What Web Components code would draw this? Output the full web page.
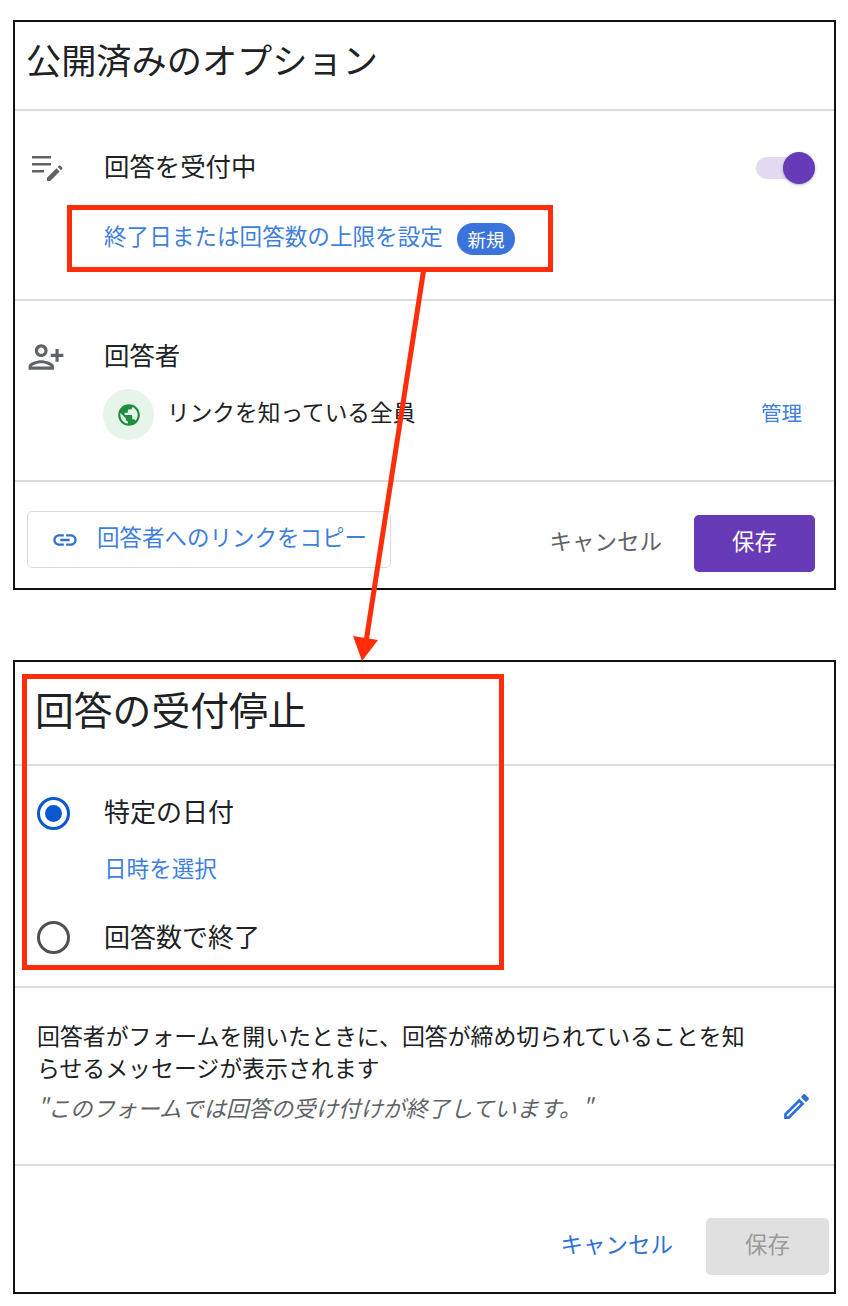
<!DOCTYPE html>
<html lang="ja">
<head>
<meta charset="utf-8">
<title>公開済みのオプション</title>
<style>
  html, body { margin: 0; background: #fff; }
  body {
    position: relative;
    width: 848px;
    height: 1306px;
    overflow: hidden;
    padding: 20px 0 0 13px;
    box-sizing: border-box;
    font-family: "Noto Sans CJK JP", "Liberation Sans", sans-serif;
    color: #202124;
  }
  dialog-panel + dialog-panel { margin-top: 70px; }
</style>
</head>
<body>

<dialog-panel style="height:570px">
  <panel-section style="height:89px;padding:0 0 14px 11px">
    <panel-title size="35.2">公開済みのオプション</panel-title>
  </panel-section>
  <panel-section style="height:190px;padding:0 19px 0 14px;justify-content:flex-start">
    <option-row label="回答を受付中" style="margin-top:35px">
      <svg slot="icon" width="36" height="30" viewBox="0 0 36 30" fill="#5f6368" style="margin-top:6px">
        <path d="M3 2h19v2.6H3zM3 9h19v2.6H3zM3 16h12v2.6H3z"/>
        <path d="M18 27v-3.2l9.5-9.5 3.2 3.2-9.5 9.5z"/>
        <path d="M28.7 13.1l1.3-1.3c.4-.4 1-.4 1.4 0l1.8 1.8c.4.4.4 1 0 1.4l-1.3 1.3z"/>
      </svg>
      <toggle-switch slot="end" style="margin-top:4px"></toggle-switch>
    </option-row>
    <div style="display:flex;align-items:center;margin:31px 0 0 75px">
      <text-link size="22.6">終了日または回答数の上限を設定</text-link>
      <new-badge style="margin-top:6px">新規</new-badge>
    </div>
  </panel-section>
  <panel-section style="height:181px;padding:0 19px 0 14px;justify-content:flex-start">
    <option-row label="回答者" style="margin-top:34px">
      <svg slot="icon" width="38" height="38" viewBox="0 0 24 24" fill="#5f6368" style="transform:scaleX(-1);margin:4px 0 0 -2px">
        <path d="M15 12c2.21 0 4-1.79 4-4s-1.79-4-4-4-4 1.79-4 4 1.79 4 4 4zm0-6c1.1 0 2 .9 2 2s-.9 2-2 2-2-.9-2-2 .9-2 2-2zm0 8c-2.67 0-8 1.34-8 4v2h16v-2c0-2.66-5.33-4-8-4zm-6 4c.22-.72 3.31-2 6-2 2.7 0 5.8 1.29 6 2H9zm-3-3v-3h3v-2H6V7H4v3H1v2h3v3h2z"/>
      </svg>
    </option-row>
    <div style="display:flex;align-items:center;margin:14px 13px 0 74px">
      <globe-chip></globe-chip>
      <span style="font-size:22.7px;margin:0 0 6px 13px;flex:1">リンクを知っている全員</span>
      <text-link size="20.5" style="margin-bottom:4px">管理</text-link>
    </div>
  </panel-section>
  <panel-footer style="height:106px;padding:0 19px 0 12px">
    <copy-link style="margin-top:29px">回答者へのリンクをコピー</copy-link>
    <span style="flex:1"></span>
    <text-button color="#5f6368" style="margin:42px 32px 0 0">キャンセル</text-button>
    <solid-button bg="#673ab7" color="#fff" style="margin-top:33px">保存</solid-button>
  </panel-footer>
</dialog-panel>

<dialog-panel style="height:634px">
  <panel-section style="height:104px;padding:0 0 10px 20px">
    <panel-title size="38.8">回答の受付停止</panel-title>
  </panel-section>
  <panel-section style="height:222px;padding:0 0 0 22px;justify-content:flex-start">
    <radio-row checked style="margin-top:27px">特定の日付</radio-row>
    <text-link size="22.6" style="margin:19px 0 0 67px">日時を選択</text-link>
    <radio-row style="margin-top:34px">回答数で終了</radio-row>
  </panel-section>
  <panel-section style="height:178px;padding:0 26px 0 22px;justify-content:flex-start">
    <close-message note="&quot;このフォームでは回答の受け付けが終了しています。&quot;">回答者がフォームを開いたときに、回答が締め切られていることを知らせるメッセージが表示されます</close-message>
  </panel-section>
  <panel-footer style="height:126px;padding:0 5px 0 0">
    <span style="flex:1"></span>
    <text-button color="#2f6fd8" style="margin:61px 33px 0 0">キャンセル</text-button>
    <solid-button bg="#e0e0e0" color="#9a9a9a" style="width:123px;margin-top:52px">保存</solid-button>
  </panel-footer>
</dialog-panel>

<red-box style="left:67px;top:205px;width:486px;height:67px"></red-box>
<red-box style="left:22px;top:674px;width:482px;height:296px"></red-box>
<red-arrow></red-arrow>

<script>
function define(name, css, html, init) {
  customElements.define(name, class extends HTMLElement {
    constructor() {
      super();
      this.attachShadow({ mode: 'open' });
    }
    connectedCallback() {
      const body = typeof html === 'function' ? html(this) : html;
      this.shadowRoot.innerHTML = `<style>${css}</style>${body}`;
      if (init) init(this);
    }
  });
}

define('dialog-panel',
  `:host { display: block; width: 823px; box-sizing: border-box; border: 2px solid #111; background: #fff; }`,
  `<slot></slot>`);

define('panel-section',
  `:host { display: flex; flex-direction: column; justify-content: center; box-sizing: border-box; border-bottom: 2px solid #dadce0; }`,
  `<slot></slot>`);

define('panel-footer',
  `:host { display: flex; align-items: flex-start; box-sizing: border-box; }`,
  `<slot></slot>`);

define('panel-title',
  `:host { display: block; line-height: 1.3; }`,
  `<slot></slot>`,
  el => { el.style.fontSize = el.getAttribute('size') + 'px'; });

define('option-row',
  `:host { display: flex; align-items: center; height: 40px; }
   .icon { width: 75px; display: flex; align-items: center; }
   .label { flex: 1; font-size: 25.4px; margin-bottom: 2px; }`,
  el => `<div class="icon"><slot name="icon"></slot></div>
         <div class="label">${el.getAttribute('label')}</div>
         <slot name="end"></slot>`);

define('toggle-switch',
  `:host { display: block; position: relative; width: 60px; height: 32px; }
   .track { position: absolute; left: 1px; top: 5px; width: 46px; height: 22px; border-radius: 11px; background: #e3daf2; }
   .thumb { position: absolute; right: 0; top: 0; width: 32px; height: 32px; border-radius: 50%; background: #673ab7; box-shadow: 0 1px 3px rgba(0,0,0,.3); }`,
  `<div class="track"></div><div class="thumb"></div>`);

define('text-link',
  `:host { display: block; color: #3f7fdd; line-height: 1.4; }`,
  `<slot></slot>`,
  el => { el.style.fontSize = el.getAttribute('size') + 'px'; });

define('new-badge',
  `:host { display: flex; align-items: center; justify-content: center; width: 58px; height: 32px; margin-left: 14px; border-radius: 16px; background: #3a73dc; color: #fff; font-size: 18.5px; }`,
  `<slot></slot>`);

define('globe-chip',
  `:host { display: flex; align-items: center; justify-content: center; width: 51px; height: 51px; border-radius: 50%; background: #e6f4ea; }`,
  `<svg width="26" height="26" viewBox="0 0 24 24" fill="#1e8e3e"><path d="M12 2C6.48 2 2 6.48 2 12s4.48 10 10 10 10-4.48 10-10S17.52 2 12 2zm-1 17.93c-3.95-.49-7-3.85-7-7.93 0-.62.08-1.21.21-1.79L9 15v1c0 1.1.9 2 2 2v1.93zm6.9-2.54c-.26-.81-1-1.39-1.9-1.39h-1v-3c0-.55-.45-1-1-1H8v-2h2c.55 0 1-.45 1-1V7h2c1.1 0 2-.9 2-2v-.41c2.93 1.19 5 4.06 5 7.41 0 2.08-.8 3.97-2.1 5.39z"/></svg>`);

define('copy-link',
  `:host { display: flex; align-items: center; box-sizing: border-box; width: 364px; height: 57px; padding: 0 0 7px 23px; border: 1.5px solid #dadce0; border-radius: 5px; color: #3f7fdd; font-size: 22.5px; }
   svg { margin: 7px 18px 0 0; }`,
  `<svg width="28" height="28" viewBox="0 0 24 24" fill="#2f6fd8"><path d="M3.9 12c0-1.71 1.39-3.1 3.1-3.1h4V7H7c-2.76 0-5 2.24-5 5s2.24 5 5 5h4v-1.9H7c-1.71 0-3.1-1.39-3.1-3.1zM8 13h8v-2H8v2zm9-6h-4v1.9h4c1.71 0 3.1 1.39 3.1 3.1s-1.39 3.1-3.1 3.1h-4V17h4c2.76 0 5-2.24 5-5s-2.24-5-5-5z"/></svg><slot></slot>`);

define('text-button',
  `:host { display: block; font-size: 22.5px; }`,
  `<slot></slot>`,
  el => { el.style.color = el.getAttribute('color'); });

define('solid-button',
  `:host { display: flex; align-items: center; justify-content: center; box-sizing: border-box; width: 121px; height: 57px; padding-bottom: 8px; border-radius: 5px; font-size: 22.4px; }`,
  `<slot></slot>`,
  el => {
    el.style.background = el.getAttribute('bg');
    el.style.color = el.getAttribute('color');
  });

define('radio-row',
  `:host { display: flex; align-items: center; height: 40px; font-size: 26px; }
   .dot { box-sizing: border-box; width: 33px; height: 33px; margin-right: 34px; border-radius: 50%; border: 3.5px solid #505050; display: flex; align-items: center; justify-content: center; }
   .label { margin-bottom: 5px; }
   :host([checked]) .dot { border-color: #0b57d0; }
   :host([checked]) .dot::after { content: ""; width: 17px; height: 17px; border-radius: 50%; background: #0b57d0; }`,
  `<div class="dot"></div><div class="label"><slot></slot></div>`);

define('close-message',
  `:host { display: block; position: relative; }
   .text { font-size: 22.9px; line-height: 32px; margin-top: 31px; width: 715px; }
   .note { font-size: 22.4px; font-style: italic; color: #5f6368; line-height: 32px; margin-top: 8px; }
   svg { position: absolute; right: -5px; top: 102px; }`,
  el => `<div class="text"><slot></slot></div>
         <div class="note">${el.getAttribute('note').replace(/"/g, '&quot;')}</div>
         <svg width="33" height="33" viewBox="0 0 24 24" fill="#2f6fd8"><path d="M3 17.25V21h3.75L17.81 9.94l-3.75-3.75L3 17.25zM5.92 19H5v-.92l9.06-9.06.92.92L5.92 19zM20.71 5.63l-2.34-2.34c-.39-.39-1.02-.39-1.41 0l-1.83 1.83 3.75 3.75 1.83-1.83c.39-.39.39-1.02 0-1.41z"/></svg>`);

// annotations drawn over the screenshot
define('red-box',
  `:host { display: block; position: absolute; box-sizing: border-box; border: 5px solid #ff2d0a; pointer-events: none; }`,
  ``);

define('red-arrow',
  `:host { display: block; position: absolute; left: 0; top: 0; width: 848px; height: 1306px; pointer-events: none; }`,
  `<svg width="848" height="1306" viewBox="0 0 848 1306">
     <line x1="423.5" y1="271" x2="366" y2="642" stroke="#ff2d0a" stroke-width="5"/>
     <polygon points="353,636 378,640 362,661" fill="#ff2d0a"/>
   </svg>`);
</script>
</body>
</html>
